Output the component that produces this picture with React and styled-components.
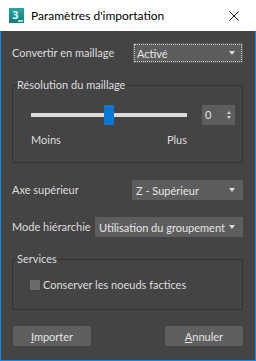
import React from "react";
import styled, { createGlobalStyle } from "styled-components";

const Global = createGlobalStyle`
  html, body { margin: 0; padding: 0; background: #ffffff; }
  body { font-family: "Lato", "Noto Sans", sans-serif; }
  * { box-sizing: border-box; }
`;

const Window = styled.div`
  width: 256px;
  height: 361px;
  display: flex;
  flex-direction: column;
  overflow: hidden;
`;

const TitleBar = styled.div`
  height: 31px;
  flex: none;
  background: #ffffff;
  display: flex;
  align-items: center;
  padding-left: 9px;
`;

const TitleText = styled.div`
  margin-left: 7px;
  font-size: 12px;
  color: #000000;
  flex: 1;
  white-space: nowrap;
`;

const CloseButton = styled.div`
  width: 46px;
  height: 31px;
  display: flex;
  align-items: center;
  justify-content: center;
  padding-left: 2px;
`;

const Body = styled.div`
  flex: 1;
  background: #444444;
  border: 1px solid #1a86dc;
  border-top: none;
  padding: 12px 12px 0 11px;
  display: flex;
  flex-direction: column;
  color: #dedede;
  font-size: 11px;
`;

const Row = styled.div`
  display: flex;
  align-items: center;
  justify-content: space-between;
  height: 20px;
  margin-top: ${(p) => p.$mt || 0}px;
`;

const Label = styled.span`
  white-space: nowrap;
  line-height: 14px;
`;

const Select = styled.div`
  flex: none;
  width: ${(p) => p.$w}px;
  height: 20px;
  background: #5d5d5d;
  display: flex;
  align-items: center;
  padding-left: 4px;
  color: #e6e6e6;
  white-space: nowrap;
  outline: ${(p) => (p.$focus ? "1px dotted #c8c8c8" : "none")};
  outline-offset: -2px;
`;

const SelectText = styled.span`
  flex: 1;
  overflow: hidden;
`;

const Arrow = styled.span`
  width: 0;
  height: 0;
  border-left: 3px solid transparent;
  border-right: 3px solid transparent;
  border-top: 4px solid #dcdcdc;
  margin: 0 8px 0 4px;
`;

const Group = styled.div`
  position: relative;
  border: 1px solid #323232;
  border-radius: 1px;
  margin-top: ${(p) => p.$mt}px;
  padding: ${(p) => p.$pad};
`;

const GroupTitle = styled.span`
  position: absolute;
  top: -8px;
  left: 3px;
  padding: 0 1px;
  background: #444444;
  line-height: 14px;
  white-space: nowrap;
`;

const SliderRow = styled.div`
  display: flex;
  align-items: center;
  height: 21px;
`;

const SliderCol = styled.div`
  width: 156px;
  display: flex;
  flex-direction: column;
`;

const Track = styled.div`
  position: relative;
  width: 156px;
  height: 4px;
  background: #dadada;
`;

const Thumb = styled.div`
  position: absolute;
  top: -8px;
  width: 10px;
  height: 20px;
  background: #0a78d7;
`;

const Spinner = styled.div`
  margin-left: 15px;
  width: 33px;
  height: 20px;
  background: #5d5d5d;
  display: flex;
  align-items: center;
  justify-content: space-between;
  padding: 0 4px 0 3px;
  color: #e6e6e6;
`;

const SpinArrows = styled.div`
  display: flex;
  flex-direction: column;
  gap: 2px;
`;

const SpinUp = styled.span`
  width: 0;
  height: 0;
  border-left: 2.5px solid transparent;
  border-right: 2.5px solid transparent;
  border-bottom: 3px solid #cfcfcf;
`;

const SpinDown = styled(SpinUp)`
  border-bottom: none;
  border-top: 3px solid #cfcfcf;
`;

const ScaleLabels = styled.div`
  width: 156px;
  display: flex;
  justify-content: space-between;
  margin-top: 8px;
  line-height: 14px;
`;

const CheckRow = styled.div`
  display: flex;
  align-items: center;
  height: 14px;
  gap: 3px;
`;

const CheckBox = styled.span`
  width: 10px;
  height: 10px;
  background: #6b6b6b;
  flex: none;
`;

const Buttons = styled.div`
  display: flex;
  justify-content: space-between;
  margin-top: 16px;
  padding-left: 1px;
`;

const Button = styled.div`
  width: 78px;
  height: 20px;
  background: #5f5f5f;
  border-radius: 2px;
  display: flex;
  align-items: center;
  justify-content: center;
  color: #e6e6e6;
`;

const MaxIcon = () => (
  <svg width="15" height="15" viewBox="0 0 15 15">
    <defs>
      <linearGradient id="mx" x1="0" y1="0" x2="0" y2="1">
        <stop offset="0" stopColor="#2aa6a6" />
        <stop offset="1" stopColor="#127a7c" />
      </linearGradient>
    </defs>
    <rect x="0" y="0" width="15" height="15" fill="url(#mx)" />
    <text x="6.5" y="11" fontSize="11" fontWeight="bold" fill="#e9fbfb" textAnchor="middle" fontFamily="Noto Sans, sans-serif">3</text>
    <rect x="9" y="12" width="5" height="2" fill="#9fe0e0" />
  </svg>
);

const CloseIcon = () => (
  <svg width="10" height="10" viewBox="0 0 10 10">
    <path d="M0.5 0.5 L9.5 9.5 M9.5 0.5 L0.5 9.5" stroke="#111" strokeWidth="1" />
  </svg>
);

export default function App() {
  return (
    <>
      <Global />
      <Window>
        <TitleBar>
          <MaxIcon />
          <TitleText>Paramètres d'importation</TitleText>
          <CloseButton>
            <CloseIcon />
          </CloseButton>
        </TitleBar>
        <Body>
          <Row>
            <Label>Convertir en maillage</Label>
            <Select $w={110} $focus>
              <SelectText>Activé</SelectText>
              <Arrow />
            </Select>
          </Row>

          <Group $mt={22} $pad="18px 0 15px 18px">
            <GroupTitle>Résolution du maillage</GroupTitle>
            <SliderRow>
              <Track>
                <Thumb style={{ left: `${(73 / 156) * 100}%` }} />
              </Track>
              <Spinner>
                <span>0</span>
                <SpinArrows>
                  <SpinUp />
                  <SpinDown />
                </SpinArrows>
              </Spinner>
            </SliderRow>
            <SliderCol>
              <ScaleLabels>
                <span>Moins</span>
                <span>Plus</span>
              </ScaleLabels>
            </SliderCol>
          </Group>

          <Row $mt={17}>
            <Label>Axe supérieur</Label>
            <Select $w={111}>
              <SelectText>Z - Supérieur</SelectText>
              <Arrow />
            </Select>
          </Row>

          <Row $mt={17}>
            <Label>Mode hiérarchie</Label>
            <Select $w={148}>
              <SelectText>Utilisation du groupement</SelectText>
              <Arrow />
            </Select>
          </Row>

          <Group $mt={22} $pad="18px 0 17px 17px">
            <GroupTitle>Services</GroupTitle>
            <CheckRow>
              <CheckBox />
              <Label>Conserver les noeuds factices</Label>
            </CheckRow>
          </Group>

          <Buttons>
            <Button>
              <span><u>I</u>mporter</span>
            </Button>
            <Button>
              <span><u>A</u>nnuler</span>
            </Button>
          </Buttons>
        </Body>
      </Window>
    </>
  );
}
